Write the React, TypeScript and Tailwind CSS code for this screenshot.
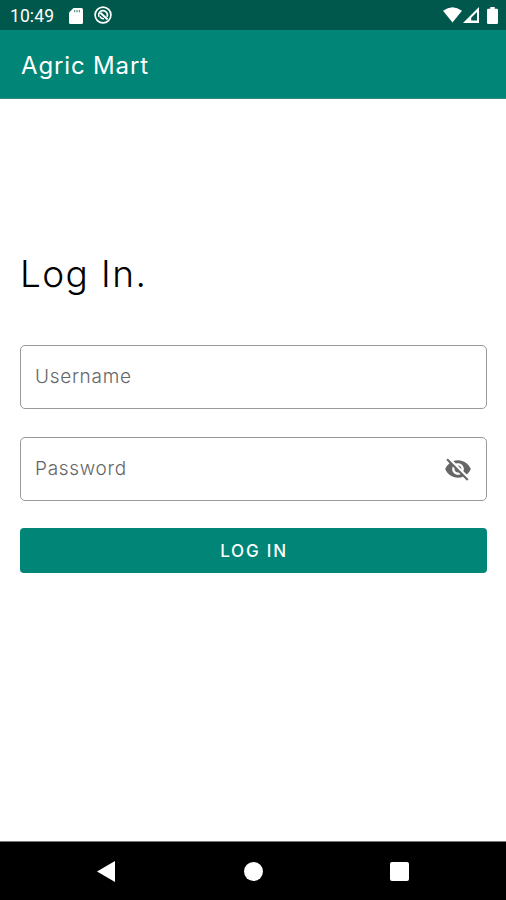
import { useState } from 'react';
import { MdVisibility, MdVisibilityOff } from 'react-icons/md';

function StatusBar() {
  return (
    <div className="flex h-[30px] items-center bg-[#00574b] pl-[10px] pr-2 text-white">
      <span className="w-[59px] pt-[3px] font-[Roboto] text-[17.5px] leading-none tracking-[0.1px]">10:49</span>
      {/* SD card */}
      <svg className="mt-px h-4 w-[14px]" viewBox="0 0 14 16">
        <path
          fill="currentColor"
          d="M4.5 0H12.5Q14 0 14 1.5V14.5Q14 16 12.5 16H1.5Q0 16 0 14.5V4.5Z"
        />
        <path d="M5.6 2V4.2M8 2V4.2M10.4 2V4.2" stroke="#00574b" strokeOpacity="0.65" strokeWidth="1.2" />
      </svg>
      <svg className="ml-[11px] h-[18px] w-[18px]" viewBox="0 0 18 18" fill="none" stroke="currentColor">
        <circle cx="9" cy="9" r="7.9" strokeWidth="1.7" />
        <path d="M4.9 10.6A4.4 4.4 0 1 1 13 10.9" strokeWidth="1.7" />
        <path d="M6.4 6.8L13.6 13.6" strokeWidth="2" />
        <path d="M5.8 10.2Q7 12.8 10 12.7" strokeWidth="1.5" />
      </svg>
      <div className="ml-auto flex items-center">
        <svg className="h-4 w-[19px]" viewBox="0 0 19 16" fill="currentColor">
          <path d="M0 3.8Q9.5 -3.2 19 3.8L9.5 15.5Z" />
        </svg>
        <svg className="ml-px h-4 w-4" viewBox="0 0 16 16" fill="currentColor" fillRule="evenodd">
          <path d="M0 16L16 0V16ZM14 5L8.2 10.8V13.6H14Z" />
        </svg>
        <svg className="ml-[8px] h-[17px] w-[11px]" viewBox="0 0 11 17" fill="currentColor">
          <path d="M3.3 0H7.7V1.8H9.8Q11 1.8 11 3V15.8Q11 17 9.8 17H1.2Q0 17 0 15.8V3Q0 1.8 1.2 1.8H3.3Z" />
        </svg>
      </div>
    </div>
  );
}

function NavigationBar() {
  return (
    <div className="flex h-[59px] items-center justify-between border-t border-[#777] bg-black px-[97px] text-white">
      <svg className="h-[21px] w-[18px]" viewBox="0 0 18 21" fill="currentColor">
        <path d="M18 0V21L0 10.5Z" />
      </svg>
      <div className="ml-[2px] h-[19px] w-[19px] rounded-full bg-white" />
      <div className="h-[19px] w-[19px] rounded-[2px] bg-white" />
    </div>
  );
}

const fieldClass =
  'h-16 w-full rounded-[5px] border border-[#999] bg-white pl-[14px] pb-px text-[19px] font-light tracking-[0.7px] text-gray-800 outline-none placeholder:text-[#666] focus:border-[#008577]';

export default function App() {
  const [username, setUsername] = useState('');
  const [password, setPassword] = useState('');
  const [showPassword, setShowPassword] = useState(false);

  return (
    <div className="flex h-[900px] w-full flex-col overflow-hidden bg-white font-[Inter,sans-serif]">
      <StatusBar />
      <header className="flex h-[69px] items-center border-b border-[#2c8b80] bg-[#008577] px-[21px] pt-[3px]">
        <h1 className="text-[24px] font-normal leading-none tracking-[0.85px] text-white">Agric Mart</h1>
      </header>

      <main className="flex-1 pl-5 pr-[19px] pt-[153px]">
        <h2 className="text-[37px] font-light leading-[44px] tracking-[1.4px] text-black">Log In.</h2>
        <form className="mt-[49px]" onSubmit={(e) => e.preventDefault()}>
          <input
            type="text"
            value={username}
            onChange={(e) => setUsername(e.target.value)}
            placeholder="Username"
            className={fieldClass}
          />
          <div className="relative mt-7">
            <input
              type={showPassword ? 'text' : 'password'}
              value={password}
              onChange={(e) => setPassword(e.target.value)}
              placeholder="Password"
              className={fieldClass}
            />
            <button
              type="button"
              onClick={() => setShowPassword(!showPassword)}
              className="absolute right-[15px] top-[18px] text-[#666]"
            >
              {showPassword ? <MdVisibility size={28} /> : <MdVisibilityOff size={28} />}
            </button>
          </div>
          <button
            type="submit"
            className="mt-[27px] h-[45px] w-full rounded-[4px] bg-[#008577] pl-px pt-[2px] text-[17px] font-medium tracking-[1.8px] text-white"
          >
            LOG IN
          </button>
        </form>
      </main>

      <NavigationBar />
    </div>
  );
}
